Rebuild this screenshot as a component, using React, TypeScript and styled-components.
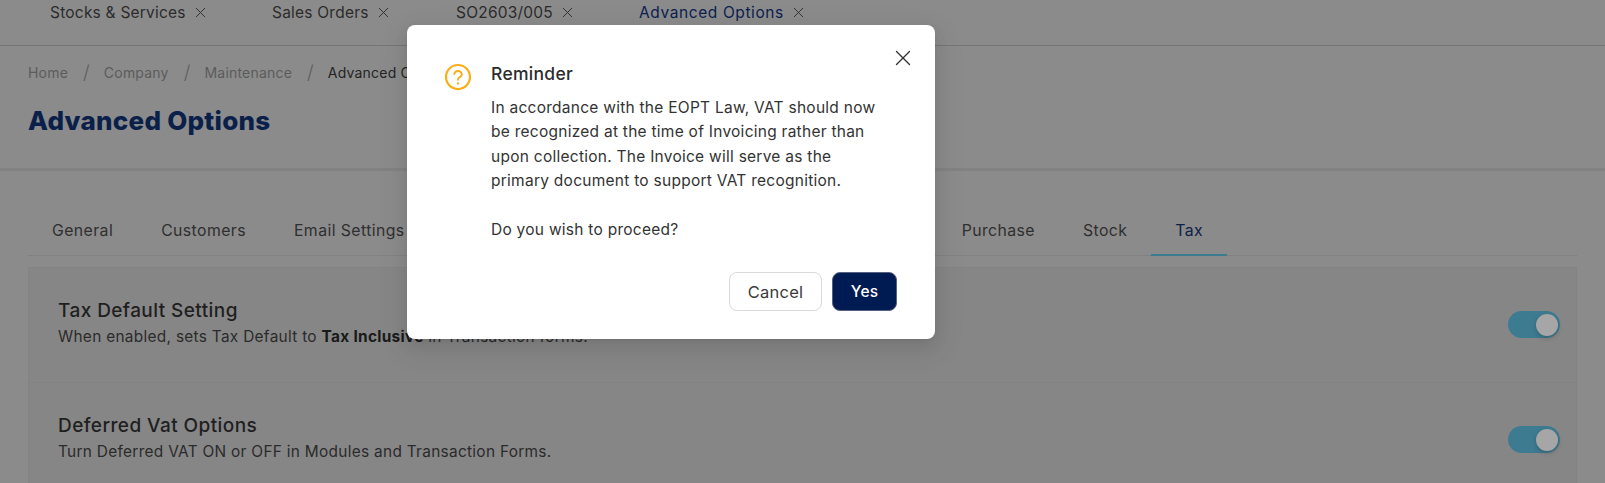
import React from "react";
import styled, { createGlobalStyle } from "styled-components";
import { X } from "lucide-react";
import { AiOutlineQuestionCircle } from "react-icons/ai";

const FONT = `Inter, "Open Sans", "Liberation Sans", sans-serif`;

const Global = createGlobalStyle`
  html, body { margin: 0; padding: 0; width: 1605px; height: 483px; overflow: hidden; background: #8b8b8b; }
  body { font-family: ${FONT}; }
  * { box-sizing: border-box; }
`;

const Page = styled.div`
  position: relative;
  width: 1605px;
  height: 483px;
  overflow: hidden;
  background: #8b8b8b;
`;

const OpenTabs = styled.div`
  display: flex;
  height: 46px;
  padding: 3px 0 0 50px;
  border-bottom: 1px solid #757575;
`;

const OpenTab = styled.div<{ $w: number; $active?: boolean }>`
  display: flex;
  align-items: flex-start;
  width: ${(p) => p.$w}px;
  height: 20px;
  font-size: 15.5px;
  line-height: 20px;
  letter-spacing: ${(p) => (p.$active ? 0.6 : 0.22)}px;
  white-space: nowrap;
  color: ${(p) => (p.$active ? "#0b2150" : "#2b2b2b")};
  svg { margin: 1px 0 0 6px; color: #333; flex: none; }
`;

const Crumbs = styled.div`
  display: flex;
  align-items: center;
  height: 22px;
  margin: 15px 0 0 28px;
  font-size: 14px;
  letter-spacing: 0.2px;
  color: #5c5c5c;
`;

const Sep = styled.span`
  margin: 0 14px 0 15px;
  font-size: 19px;
  font-weight: 300;
  color: #5e5e5e;
`;

const Current = styled.span`
  color: #242424;
  white-space: nowrap;
`;

const Title = styled.h1`
  margin: 20px 0 0 28px;
  font-size: 26px;
  line-height: 36px;
  font-weight: 800;
  letter-spacing: 0.25px;
  color: #0a1f49;
`;

const HeaderRule = styled.div`
  height: 3px;
  margin-top: 29px;
  background: #828282;
`;

const SettingTabs = styled.div`
  display: flex;
  align-items: stretch;
  height: 50px;
  margin: 35px 28px 0;
  border-bottom: 1px solid #818181;
`;

const SettingTab = styled.div<{ $active?: boolean }>`
  display: flex;
  align-items: center;
  height: 50px;
  padding: 0 24px;
  margin-bottom: -1px;
  font-size: 15.8px;
  letter-spacing: 0.42px;
  white-space: nowrap;
  color: ${(p) => (p.$active ? "#0d2148" : "#2f2f2f")};
  border-bottom: 2px solid ${(p) => (p.$active ? "#3d7c90" : "transparent")};
`;

const HiddenTabs = styled.div`
  width: 509px;
`;

const Card = styled.div`
  margin: 11px 28px 0;
  background: #868686;
  border: 1px solid #838383;
`;

const Row = styled.div`
  display: flex;
  align-items: flex-start;
  justify-content: space-between;
  height: 115px;
  padding: 30px 16px 0 29px;
  border-bottom: 1px solid #828282;
`;

const RowTitle = styled.div`
  font-size: 19px;
  line-height: 26px;
  font-weight: 500;
  letter-spacing: 0.42px;
  color: #1f1f1f;
`;

const RowText = styled.div`
  font-size: 15.4px;
  line-height: 25px;
  letter-spacing: 0.3px;
  color: #2b2b2b;
  b { font-weight: 700; color: #1a1a1a; }
`;

const Toggle = styled.div`
  display: flex;
  align-items: center;
  justify-content: flex-end;
  width: 52px;
  height: 27px;
  margin-top: 13px;
  padding-right: 2px;
  border-radius: 14px;
  background: #3d7b90;
`;

const Knob = styled.div`
  width: 22px;
  height: 22px;
  border-radius: 50%;
  background: #a6a6a6;
  box-shadow: 0 2px 5px rgba(0, 0, 0, 0.2);
`;

const Modal = styled.div`
  position: absolute;
  left: 407px;
  top: 25px;
  width: 528px;
  height: 314px;
  display: flex;
  flex-direction: column;
  padding: 36px 38px 28px 36px;
  background: #fff;
  border-radius: 8px;
  box-shadow: 0 6px 16px rgba(0, 0, 0, 0.08), 0 3px 6px -4px rgba(0, 0, 0, 0.12), 0 9px 28px 8px rgba(0, 0, 0, 0.05);
`;

const CloseButton = styled.button`
  position: absolute;
  top: 20px;
  right: 19px;
  display: flex;
  width: 26px;
  height: 26px;
  padding: 0;
  border: 0;
  background: none;
  color: #333;
`;

const Body = styled.div`
  display: flex;
  gap: 18px;
`;

const IconWrap = styled.div`
  flex: none;
  width: 30px;
  height: 30px;
  margin-top: 1px;
  color: #faad14;
  svg { display: block; }
`;

const Texts = styled.div`
  min-width: 0;
`;

const ModalTitle = styled.div`
  font-size: 17.5px;
  line-height: 26px;
  font-weight: 500;
  letter-spacing: 0.3px;
  color: #2c2c2c;
`;

const Message = styled.div`
  margin-top: 9px;
  font-size: 15.5px;
  line-height: 24.4px;
  letter-spacing: 0.26px;
  white-space: nowrap;
  color: #333;
`;

const Footer = styled.div`
  display: flex;
  justify-content: flex-end;
  gap: 10px;
  margin-top: auto;
`;

const Btn = styled.button<{ $primary?: boolean }>`
  height: 39px;
  width: ${(p) => (p.$primary ? 65 : 93)}px;
  padding: 0;
  border-radius: 8px;
  font-family: ${FONT};
  font-size: ${(p) => (p.$primary ? 15.5 : 16.5)}px;
  letter-spacing: 0.2px;
  font-weight: ${(p) => (p.$primary ? 500 : 400)};
  color: ${(p) => (p.$primary ? "#fff" : "#3a3a3a")};
  background: ${(p) => (p.$primary ? "#001a52" : "#fff")};
  border: 1px solid ${(p) => (p.$primary ? "#56617f" : "#d9d9d9")};
`;

const Crumb = ["Home", "Company", "Maintenance"];

export default function App() {
  return (
    <Page>
      <Global />
      <OpenTabs>
        <OpenTab $w={222}>Stocks &amp; Services<X size={17} strokeWidth={1.4} /></OpenTab>
        <OpenTab $w={184}>Sales Orders<X size={17} strokeWidth={1.4} /></OpenTab>
        <OpenTab $w={183}>SO2603/005<X size={17} strokeWidth={1.4} /></OpenTab>
        <OpenTab $w={190} $active>Advanced Options<X size={17} strokeWidth={1.4} /></OpenTab>
      </OpenTabs>
      <Crumbs>
        {Crumb.map((c) => (
          <React.Fragment key={c}>
            <span>{c}</span>
            <Sep>/</Sep>
          </React.Fragment>
        ))}
        <Current>Advanced Options</Current>
      </Crumbs>
      <Title>Advanced Options</Title>
      <HeaderRule />
      <SettingTabs>
        <SettingTab>General</SettingTab>
        <SettingTab>Customers</SettingTab>
        <SettingTab>Email Settings</SettingTab>
        <HiddenTabs />
        <SettingTab>Purchase</SettingTab>
        <SettingTab>Stock</SettingTab>
        <SettingTab $active>Tax</SettingTab>
      </SettingTabs>
      <Card>
        <Row>
          <div>
            <RowTitle>Tax Default Setting</RowTitle>
            <RowText>When enabled, sets Tax Default to <b>Tax Inclusive</b> in Transaction forms.</RowText>
          </div>
          <Toggle><Knob /></Toggle>
        </Row>
        <Row>
          <div>
            <RowTitle>Deferred Vat Options</RowTitle>
            <RowText>Turn Deferred VAT ON or OFF in Modules and Transaction Forms.</RowText>
          </div>
          <Toggle><Knob /></Toggle>
        </Row>
      </Card>
      <Modal>
        <CloseButton aria-label="Close"><X size={26} strokeWidth={1.25} /></CloseButton>
        <Body>
          <IconWrap><AiOutlineQuestionCircle size={30} /></IconWrap>
          <Texts>
            <ModalTitle>Reminder</ModalTitle>
            <Message>
              In accordance with the EOPT Law, VAT should now<br />
              be recognized at the time of Invoicing rather than<br />
              upon collection. The Invoice will serve as the<br />
              primary document to support VAT recognition.<br />
              <br />
              Do you wish to proceed?
            </Message>
          </Texts>
        </Body>
        <Footer>
          <Btn>Cancel</Btn>
          <Btn $primary>Yes</Btn>
        </Footer>
      </Modal>
    </Page>
  );
}
